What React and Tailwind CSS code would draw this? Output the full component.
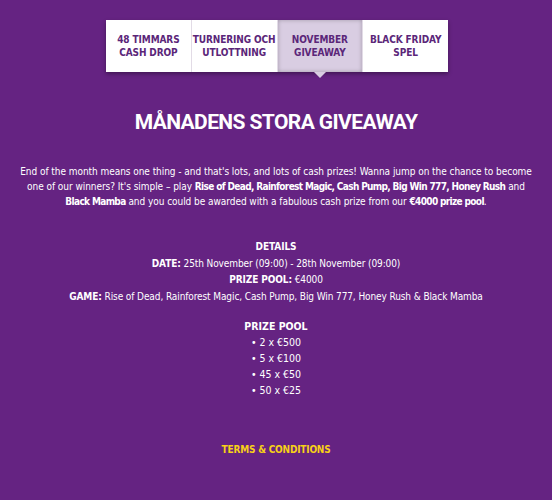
const tabs = [
  ["48 TIMMARS", "CASH DROP"],
  ["TURNERING OCH", "UTLOTTNING"],
  ["NOVEMBER", "GIVEAWAY"],
  ["BLACK FRIDAY", "SPEL"],
];

const font = { fontFamily: '"DejaVu Sans Condensed", "DejaVu Sans", sans-serif' };
const head = { fontFamily: 'Roboto, "Liberation Sans", sans-serif' };

export default function App() {
  return (
    <div className="w-[552px] h-[500px] bg-[#652382] text-white overflow-hidden" style={font}>
      {/* Tabs */}
      <div className="flex justify-center pt-5 pl-[2px]">
        <div className="flex w-[342px] bg-white shadow-[0_2px_4px_rgba(0,0,0,0.35)]">
          {tabs.map((t, i) => {
            const active = i === 2;
            return (
              <div
                key={i}
                className={`relative flex-1 h-[52px] flex flex-col items-center justify-center whitespace-nowrap text-[10px] leading-[13px] font-bold tracking-[-0.1px] text-[#5b2679] ${
                  active ? "bg-[#d9cde2] shadow-[inset_0_0_4px_rgba(0,0,0,0.25)]" : ""
                } ${i > 0 ? "border-l border-[#e2dbe6]" : ""}`}
              >
                <span>{t[0]}</span>
                <span>{t[1]}</span>
                {active && (
                  <span className="absolute left-1/2 -translate-x-1/2 top-full w-0 h-0 border-l-[6px] border-r-[6px] border-t-[6px] border-l-transparent border-r-transparent border-t-[#d9cde2]" />
                )}
              </div>
            );
          })}
        </div>
      </div>

      {/* Heading */}
      <h1 className="mt-[35px] text-center text-[21px] leading-[30px] font-bold tracking-[-0.6px]" style={head}>
        MÅNADENS STORA GIVEAWAY
      </h1>

      {/* Intro */}
      <p className="mt-[27px] text-center whitespace-nowrap text-[10px] leading-[15px] tracking-[-0.05px] [&_b]:tracking-[-0.65px]">
        End of the month means one thing - and that's lots, and lots of cash prizes! Wanna jump on the chance to become
        <br />
        one of our winners? It's simple – play <b>Rise of Dead, Rainforest Magic, Cash Pump, Big Win 777, Honey Rush</b> and
        <br />
        <b>Black Mamba</b> and you could be awarded with a fabulous cash prize from our <b>€4000 prize pool</b>.
      </p>

      {/* Details */}
      <div className="mt-[30px] text-center text-[10px] leading-[16.5px] tracking-[-0.1px]">
        <div className="font-bold">DETAILS</div>
        <div>
          <b>DATE:</b> 25th November (09:00) - 28th November (09:00)
        </div>
        <div>
          <b>PRIZE POOL:</b> €4000
        </div>
        <div>
          <b>GAME:</b> Rise of Dead, Rainforest Magic, Cash Pump, Big Win 777, Honey Rush &amp; Black Mamba
        </div>
      </div>

      {/* Prize pool */}
      <div className="mt-[13px] text-center text-[10.5px] leading-[16px]">
        <div className="font-bold">PRIZE POOL</div>
        <div>• 2 x €500</div>
        <div>• 5 x €100</div>
        <div>• 45 x €50</div>
        <div>• 50 x €25</div>
      </div>

      {/* Terms */}
      <div className="mt-[44px] text-center text-[10px] font-bold tracking-[-0.2px] text-[#f7d117]">
        TERMS &amp; CONDITIONS
      </div>
    </div>
  );
}
